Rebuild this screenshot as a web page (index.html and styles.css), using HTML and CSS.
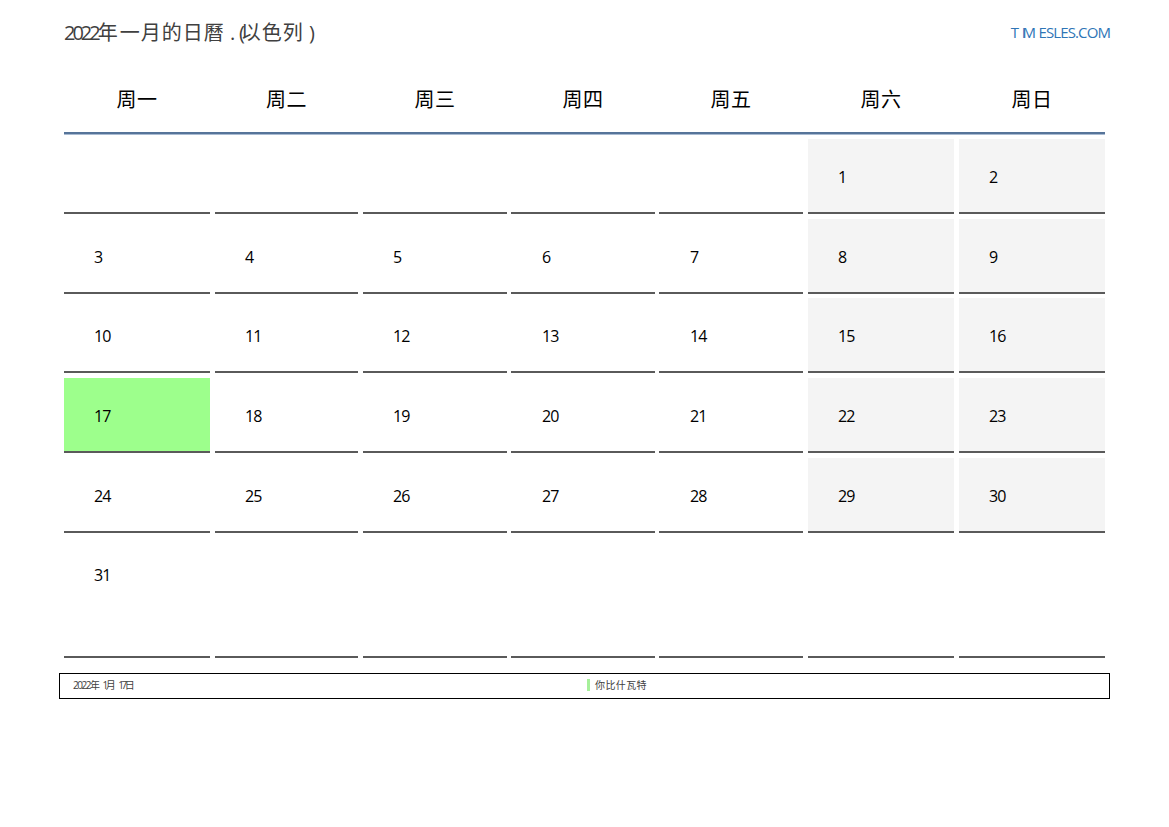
FILE: index.html
```html
<!DOCTYPE html>
<html lang="zh">
<head>
<meta charset="utf-8">
<title>2022年一月的日曆</title>
<link rel="stylesheet" href="styles.css">
</head>
<body>
<div class="page">
  <header class="top">
    <h1 class="title"><span class="tight">2022</span><span class="nian">年</span><span class="cjk">一月的日曆</span> <span class="dot">.</span><span class="paren">(</span><span class="cjk">以色列</span> )</h1>
    <a class="site"><span class="site-t">T</span><span class="site-i">I</span><span class="site-m">M</span>ESLES.COM</a>
  </header>
  <div class="heads">
    <div class="head">周一</div><div class="head">周二</div><div class="head">周三</div><div class="head">周四</div><div class="head">周五</div><div class="head">周六</div><div class="head">周日</div>
  </div>
  <div class="rule"></div>
  <div class="grid">
    <div class="cell"></div><div class="cell"></div><div class="cell"></div><div class="cell"></div><div class="cell"></div><div class="cell off">1</div><div class="cell off">2</div>
    <div class="cell">3</div><div class="cell">4</div><div class="cell">5</div><div class="cell">6</div><div class="cell">7</div><div class="cell off">8</div><div class="cell off">9</div>
    <div class="cell">10</div><div class="cell">11</div><div class="cell">12</div><div class="cell">13</div><div class="cell">14</div><div class="cell off">15</div><div class="cell off">16</div>
    <div class="cell today">17</div><div class="cell">18</div><div class="cell">19</div><div class="cell">20</div><div class="cell">21</div><div class="cell off">22</div><div class="cell off">23</div>
    <div class="cell">24</div><div class="cell">25</div><div class="cell">26</div><div class="cell">27</div><div class="cell">28</div><div class="cell off">29</div><div class="cell off">30</div>
    <div class="cell">31</div><div class="cell"></div><div class="cell"></div><div class="cell"></div><div class="cell"></div><div class="cell"></div><div class="cell"></div>
  </div>
  <footer class="foot">
    <span class="date"><span class="year">2022</span>年 <span class="num">1</span>月 <span class="num">17</span>日</span>
    <span class="event">你比什瓦特</span>
  </footer>
</div>
</body>
</html>
```
FILE: styles.css
```css
* { box-sizing: border-box; }
html, body { margin: 0; padding: 0; background: #fff; }
body { font-family: "Open Sans", "Noto Sans CJK SC", sans-serif; color: #000; }
.page { width: 1169px; height: 827px; padding: 0 59px; }
.top { display: flex; justify-content: space-between; align-items: flex-start; height: 64px; padding: 19px 0 0 5px; }
.title { margin: 0; font-size: 20px; line-height: 27px; font-weight: 400; color: #404040; }
.tight { letter-spacing: -3px; }
.nian { letter-spacing: 2px; }
.cjk { letter-spacing: 1px; }
.dot { letter-spacing: 3.7px; }
.paren { margin-right: -4px; }
.site { font-size: 15px; line-height: 27px; color: #2e75b6; letter-spacing: -0.9px; }
.site-t { letter-spacing: 2.7px; }
.site-i { letter-spacing: -3.3px; }
.site-m { letter-spacing: 2.5px; }
.heads, .grid { display: grid; grid-template-columns: 151px 148px 148px 148px 149px 151px 146px; margin-left: 5px; width: 1041px; }
.heads { height: 68px; }
.head { font-size: 20px; line-height: 72px; text-align: center; letter-spacing: 0.5px; margin-right: 5px; }
.head:nth-child(7n+3), .head:nth-child(7n+4) { margin-right: 4px; }
.head:nth-child(7n) { margin-right: 0; }
.rule { height: 3px; width: 1041px; margin-left: 5px; background: #567499; border-bottom: 1px solid #a9bbd2; }
.grid { grid-template-rows: 75px 75px 75px 75px 75px 121px; row-gap: 4.6px; padding-top: 4.3px; }
.cell { margin-right: 5px; padding: 26px 0 0 30px; font-size: 16px; line-height: 24px; letter-spacing: -1px; border-bottom: 2px solid #5a5a5a; }
.cell:nth-child(7n+3), .cell:nth-child(7n+4) { margin-right: 4px; }
.cell:nth-child(7n+4), .cell:nth-child(7n+5) { padding-left: 31px; }
.cell:nth-child(7n) { margin-right: 0; }
.off { background: #f4f4f4; }
.today { background: #9dff8c; }
.foot { display: flex; width: 1051px; height: 26px; margin-top: 15px; border: 1px solid #000; font-size: 10px; line-height: 23px; color: #404040; padding-left: 13px; }
.date { width: 514px; }
.year { letter-spacing: -1.5px; }
.num { letter-spacing: -2.5px; }
.event { border-left: 3px solid #a6f09a; height: 12px; margin-top: 5px; line-height: 12px; padding-left: 5px; letter-spacing: 0.4px; }
```
